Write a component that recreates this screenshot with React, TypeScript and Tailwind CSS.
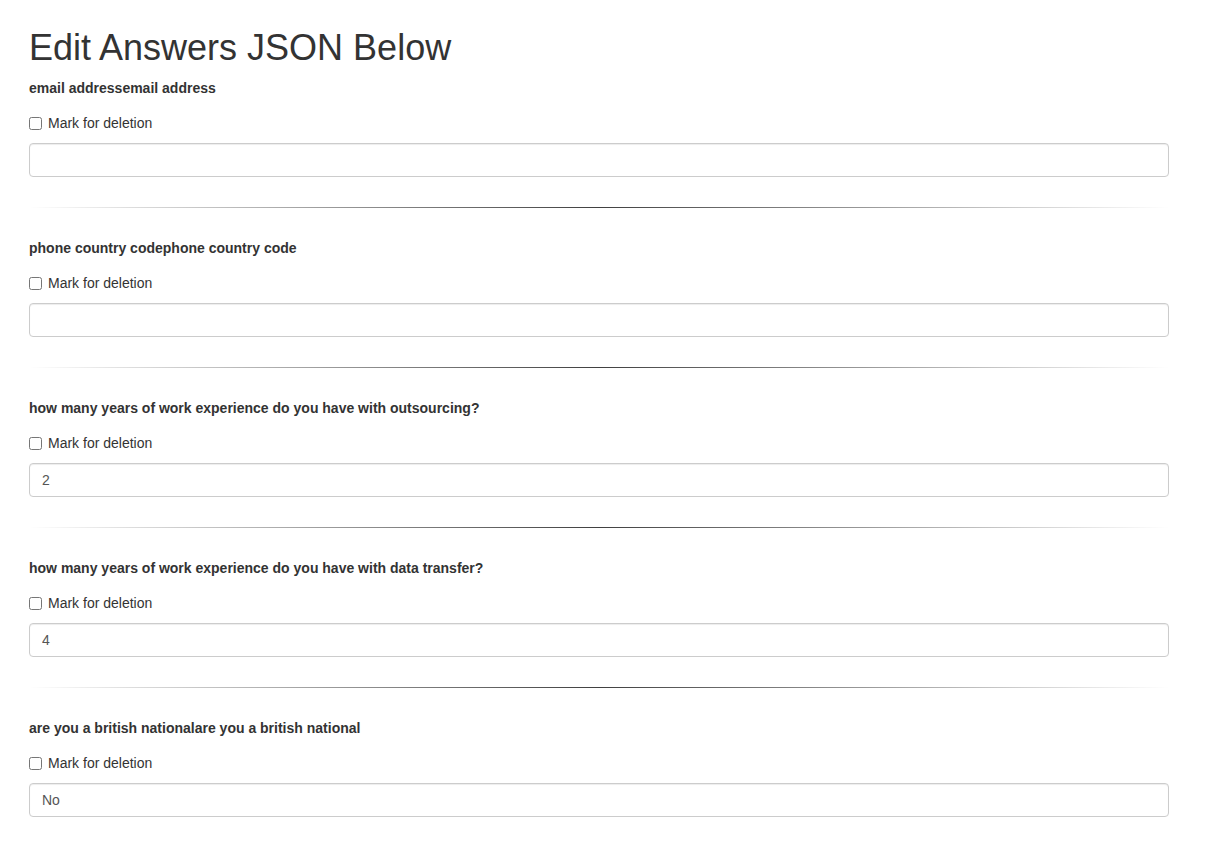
import { useState } from 'react';

type Answer = {
  question: string;
  value: string;
};

const initialAnswers: Answer[] = [
  { question: 'email addressemail address', value: '' },
  { question: 'phone country codephone country code', value: '' },
  { question: 'how many years of work experience do you have with outsourcing?', value: '2' },
  { question: 'how many years of work experience do you have with data transfer?', value: '4' },
  { question: 'are you a british nationalare you a british national', value: 'No' },
];

const App = () => {
  const [answers, setAnswers] = useState<Answer[]>(initialAnswers);
  const [marked, setMarked] = useState<boolean[]>(initialAnswers.map(() => false));

  const updateValue = (index: number, value: string) => {
    setAnswers((prev) => prev.map((a, i) => (i === index ? { ...a, value } : a)));
  };

  const toggleMark = (index: number) => {
    setMarked((prev) => prev.map((m, i) => (i === index ? !m : m)));
  };

  return (
    <div className="min-h-screen bg-white font-['Liberation_Sans',Arial,sans-serif] text-[14px] leading-[20px] text-[#333]">
      <div className="w-[1140px] ml-[29px]">
        <h1 className="pt-[28px] mb-[10px] text-[36px] leading-[40px] font-normal text-[#333]">
          Edit Answers JSON Below
        </h1>

        {answers.map((answer, index) => (
          <div key={index}>
            {index > 0 && (
              <hr className="h-px my-[30px] border-0 bg-[linear-gradient(to_right,rgba(0,0,0,0),rgba(0,0,0,0.75),rgba(0,0,0,0))]" />
            )}
            <div>
              <label className="inline-block mb-[5px] font-bold">{answer.question}</label>
              <div className="my-[10px]">
                <label className="flex items-center h-[20px] cursor-pointer">
                  <input
                    type="checkbox"
                    checked={marked[index]}
                    onChange={() => toggleMark(index)}
                    className="w-[13px] h-[13px] m-0 mr-[6px]"
                  />
                  <span>Mark for deletion</span>
                </label>
              </div>
              <input
                type="text"
                value={answer.value}
                onChange={(e) => updateValue(index, e.target.value)}
                className="block w-full h-[34px] px-[12px] py-[6px] text-[14px] text-[#555] bg-white border border-[#ccc] rounded-[4px] shadow-[inset_0_1px_1px_rgba(0,0,0,0.075)] outline-none"
              />
            </div>
          </div>
        ))}
        <hr className="h-px my-[30px] border-0 bg-[linear-gradient(to_right,rgba(0,0,0,0),rgba(0,0,0,0.75),rgba(0,0,0,0))]" />
      </div>
    </div>
  );
};

export default App;
